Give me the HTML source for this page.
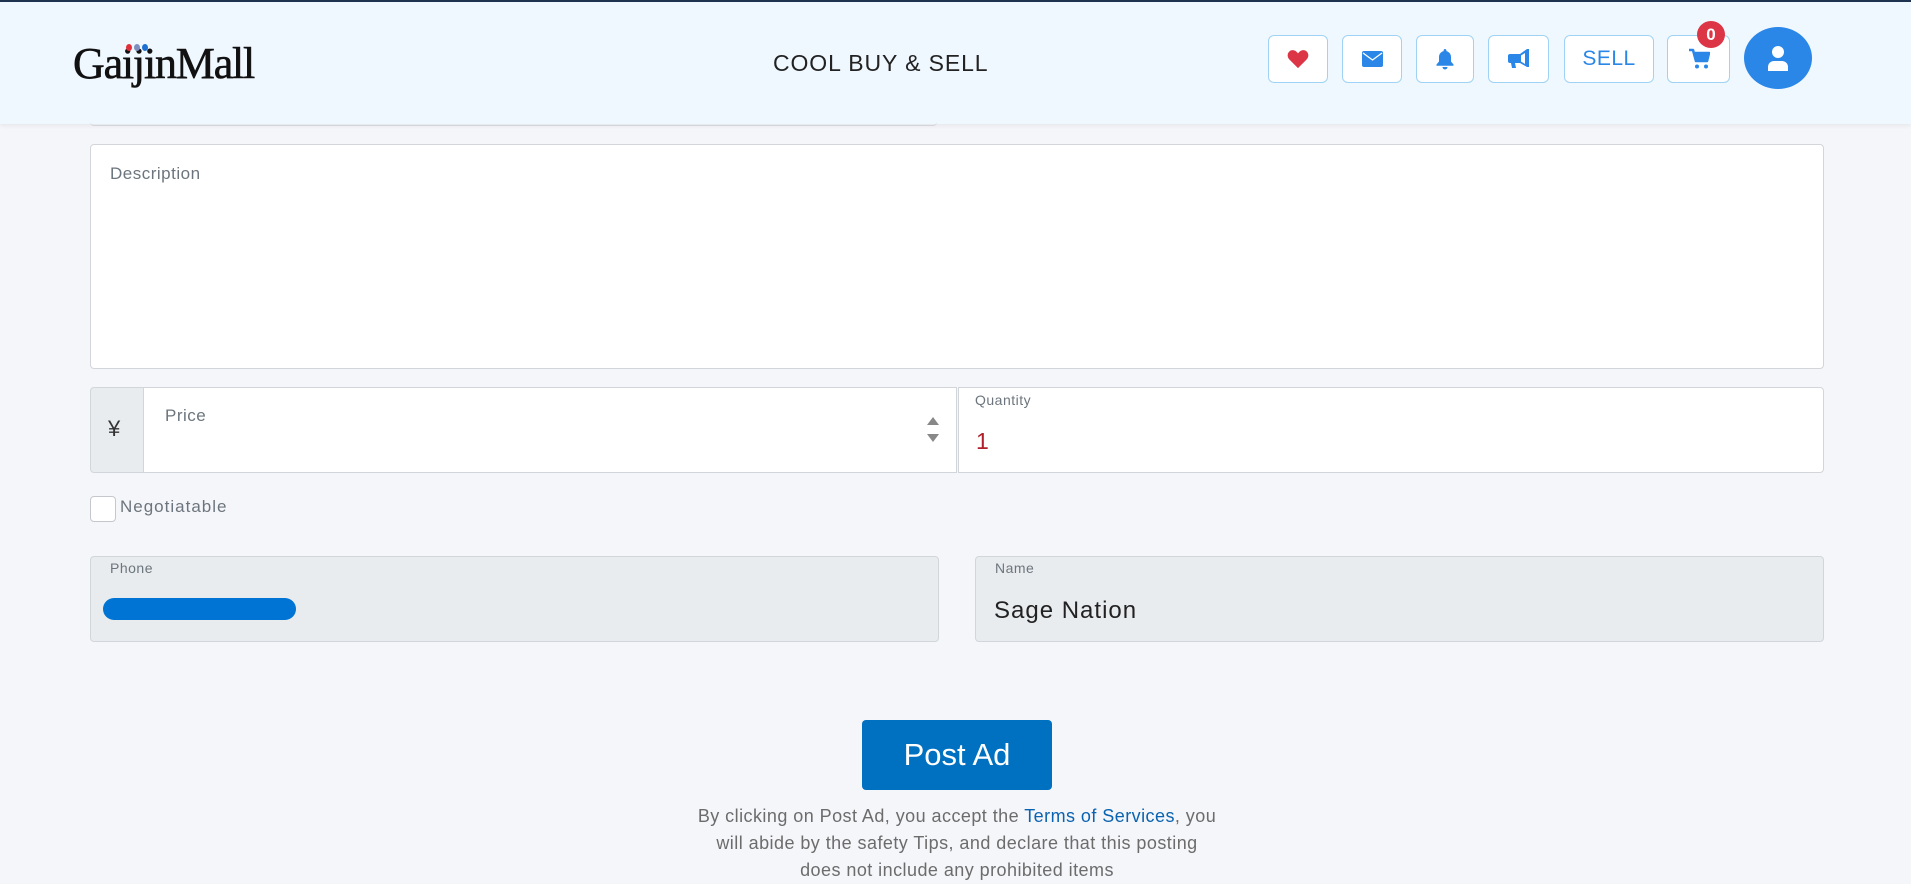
<!DOCTYPE html>
<html><head><meta charset="utf-8"><style>
*{box-sizing:border-box;margin:0;padding:0}
body{width:1911px;height:875px;overflow:hidden;background:#f5f6fa;font-family:"Liberation Sans",sans-serif;position:relative}
.hdr{position:absolute;left:0;top:0;width:1911px;height:124px;background:#f0f8ff;border-top:2px solid #1e3350;box-shadow:0 2px 4px rgba(0,0,0,.06);z-index:2}
.abs{position:absolute}
.btn{position:absolute;top:33px;height:48px;background:#fff;border:1px solid #9fd3f5;border-radius:6px;display:flex;align-items:center;justify-content:center}
.box{position:absolute;background:#fff;border:1px solid #d2d5da;border-radius:4px}
.lbl{position:absolute;color:#6c757d;font-size:15px;letter-spacing:.5px}
</style></head><body>
<div class="box" style="left:90px;top:90px;width:847px;height:36px;z-index:3;border-top:none;background:transparent;border-left:none;border-right:none"></div>
<div class="hdr">
 <div class="abs" style="left:73px;top:36px;font-family:'Liberation Serif',serif;font-size:44px;letter-spacing:-1.2px;color:#111;-webkit-text-stroke:0.6px #111">GaijinMall</div>
 <div class="abs" style="left:126px;top:42px;width:6px;height:7px;border-radius:50%;background:#e0313a"></div>
 <div class="abs" style="left:134px;top:42px;width:6px;height:7px;border-radius:50%;background:#7d8fbf"></div>
 <div class="abs" style="left:142px;top:42px;width:6px;height:7px;border-radius:50%;background:#1d6fd1"></div>
 <div class="abs" style="left:773px;top:48px;font-size:23px;color:#222;letter-spacing:.9px">COOL BUY &amp; SELL</div>
 <div class="btn" style="left:1268px;width:60px"><svg width="22" height="20" viewBox="0 0 24 22"><path d="M12 21L2.5 11.5C0 9 0 4.8 2.6 2.6 5 .6 8.5 1 10.5 3.2L12 4.8 13.5 3.2C15.5 1 19 .6 21.4 2.6 24 4.8 24 9 21.5 11.5Z" fill="#dc3545"/></svg></div>
 <div class="btn" style="left:1342px;width:60px"><svg width="21" height="16" viewBox="0 0 21 16"><rect width="21" height="16" rx="2" fill="#2a87e8"/><path d="M1 2l9.5 7L20 2" stroke="#fff" stroke-width="1.3" fill="none"/></svg></div>
 <div class="btn" style="left:1416px;width:58px"><svg width="18" height="22" viewBox="0 0 18 22"><path d="M9 1c.8 0 1.4.6 1.4 1.4v.7C13 3.7 15 6 15 9v4.5l2.5 3v1.2H.5v-1.2L3 13.5V9c0-3 2-5.3 4.6-5.9v-.7C7.6 1.6 8.2 1 9 1z" fill="#2a87e8"/><path d="M6.5 19h5a2.5 2.5 0 0 1-5 0z" fill="#2a87e8"/></svg></div>
 <div class="btn" style="left:1488px;width:61px"><svg width="24" height="22" viewBox="0 0 24 22"><path d="M20 1h2v18h-2l-7-4H8l1 5H5L4 15H3a2 2 0 0 1-2-2V8a2 2 0 0 1 2-2h10z" fill="#2a87e8"/><path d="M18 5l-4 2.5v6L18 16z" fill="#fff"/></svg></div>
 <div class="btn" style="left:1564px;width:90px;color:#2a87e8;font-size:21px;letter-spacing:.5px">SELL</div>
 <div class="btn" style="left:1667px;width:63px"><svg width="22" height="22" viewBox="0 0 22 22"><path d="M1 2h4l3 11h11l2-8H7" stroke="#2a87e8" stroke-width="2.6" fill="none" stroke-linejoin="round"/><path d="M7 5h14l-2 8H8z" fill="#2a87e8"/><circle cx="9" cy="18.5" r="2" fill="#2a87e8"/><circle cx="18" cy="18.5" r="2" fill="#2a87e8"/></svg></div>
 <div class="abs" style="left:1697px;top:19px;width:28px;height:27px;border-radius:50%;background:#dc3545;color:#fff;font-size:17px;font-weight:bold;text-align:center;line-height:27px">0</div>
 <div class="abs" style="left:1744px;top:25px;width:68px;height:62px;border-radius:50%;background:#2a87e8;display:flex;align-items:center;justify-content:center"><svg width="24" height="26" viewBox="0 0 24 26"><circle cx="12" cy="7" r="6" fill="#fff"/><path d="M2 26v-4a6 6 0 0 1 6-6h8a6 6 0 0 1 6 6v4z" fill="#fff"/></svg></div>
</div>

<div class="box" style="left:90px;top:144px;width:1734px;height:225px"></div>
<div class="lbl" style="left:110px;top:164px;font-size:17px">Description</div>

<div class="abs" style="left:90px;top:387px;width:54px;height:86px;background:#e9ecef;border:1px solid #d2d5da;border-radius:4px 0 0 4px"></div>
<div class="abs" style="left:108px;top:416px;font-size:22px;color:#333">¥</div>
<div class="abs" style="left:143px;top:387px;width:814px;height:86px;background:#fff;border:1px solid #d2d5da"></div>
<div class="lbl" style="left:165px;top:406px;font-size:17px">Price</div>
<div class="abs" style="left:927px;top:417px;width:0;height:0;border-left:6px solid transparent;border-right:6px solid transparent;border-bottom:8px solid #888"></div>
<div class="abs" style="left:927px;top:434px;width:0;height:0;border-left:6px solid transparent;border-right:6px solid transparent;border-top:8px solid #888"></div>
<div class="abs" style="left:958px;top:387px;width:866px;height:86px;background:#fff;border:1px solid #d2d5da;border-radius:0 4px 4px 0"></div>
<div class="lbl" style="left:975px;top:392px;font-size:14px">Quantity</div>
<div class="abs" style="left:976px;top:428px;font-size:23px;color:#b0202a">1</div>

<div class="abs" style="left:90px;top:496px;width:26px;height:26px;background:#fff;border:1px solid #c4c8cd;border-radius:4px"></div>
<div class="lbl" style="left:120px;top:497px;font-size:17px;letter-spacing:1px">Negotiatable</div>

<div class="abs" style="left:90px;top:556px;width:849px;height:86px;background:#e9ecef;border:1px solid #d2d5da;border-radius:4px"></div>
<div class="lbl" style="left:110px;top:560px;font-size:14px">Phone</div>
<div class="abs" style="left:103px;top:598px;width:193px;height:22px;background:#0074d4;border-radius:11px"></div>
<div class="abs" style="left:975px;top:556px;width:849px;height:86px;background:#e9ecef;border:1px solid #d2d5da;border-radius:4px"></div>
<div class="lbl" style="left:995px;top:560px;font-size:14px">Name</div>
<div class="abs" style="left:994px;top:597px;font-size:24px;color:#222;letter-spacing:1px">Sage Nation</div>

<div class="abs" style="left:862px;top:720px;width:190px;height:70px;background:#0070c0;border-radius:4px;color:#fff;font-size:31px;text-align:center;line-height:70px">Post Ad</div>
<div class="abs" style="left:627px;top:803px;width:660px;text-align:center;color:#6c6c6c;font-size:18px;line-height:27px;letter-spacing:.45px">By clicking on Post Ad, you accept the <span style="color:#0a63b0">Terms of Services</span>, you<br>will abide by the safety Tips, and declare that this posting<br>does not include any prohibited items</div>
</body></html>
